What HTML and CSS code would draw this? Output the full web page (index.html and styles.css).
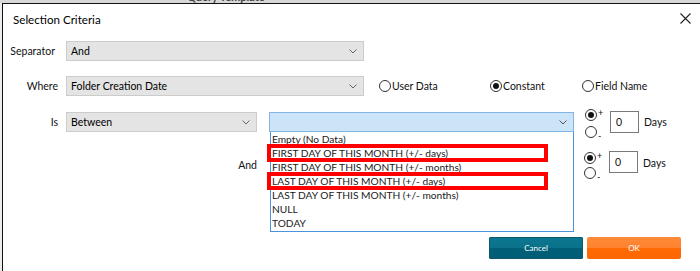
FILE: index.html
```html
<!DOCTYPE html>
<html lang="en">
<head>
    <meta charset="UTF-8">
    <meta name="viewport" content="width=device-width, initial-scale=1.0">
    <title>Selection Criteria</title>
    <link rel="stylesheet" href="styles.css">
</head>
<body>
    <div class="backdrop">
        <span class="backdrop-title">Query Template</span>
    </div>

    <div class="dialog">
        <div class="title-bar">
            <span class="title">Selection Criteria</span>
            <svg class="close" width="11" height="11" viewBox="0 0 11 11">
                <path d="M0.5 0.5 L10.5 10.5 M10.5 0.5 L0.5 10.5" stroke="#222" stroke-width="1.1" fill="none"/>
            </svg>
        </div>

        <div class="form">
            <div class="row row-separator">
                <label class="field-label label-separator">Separator</label>
                <div class="select select-wide">
                    <span>And</span>
                    <svg class="chevron" width="8" height="5" viewBox="0 0 8 5"><path d="M0.5 0.5 L4 4 L7.5 0.5" stroke="#666" fill="none"/></svg>
                </div>
            </div>

            <div class="row row-where">
                <label class="field-label">Where</label>
                <div class="select select-wide">
                    <span>Folder Creation Date</span>
                    <svg class="chevron" width="8" height="5" viewBox="0 0 8 5"><path d="M0.5 0.5 L4 4 L7.5 0.5" stroke="#666" fill="none"/></svg>
                </div>
                <div class="source-options">
                    <span class="radio-item item-user"><span class="radio"></span>User Data</span>
                    <span class="radio-item item-constant"><span class="radio checked"></span>Constant</span>
                    <span class="radio-item"><span class="radio"></span>Field Name</span>
                </div>
            </div>

            <div class="row row-is">
                <label class="field-label">Is</label>
                <div class="select select-op">
                    <span>Between</span>
                    <svg class="chevron" width="8" height="5" viewBox="0 0 8 5"><path d="M0.5 0.5 L4 4 L7.5 0.5" stroke="#666" fill="none"/></svg>
                </div>
                <div class="combo">
                    <div class="select select-value open">
                        <span></span>
                        <svg class="chevron" width="8" height="5" viewBox="0 0 8 5"><path d="M0.5 0.5 L4 4 L7.5 0.5" stroke="#555" fill="none"/></svg>
                    </div>
                    <ul class="dropdown">
                        <li>Empty (No Data)</li>
                        <li>FIRST DAY OF THIS MONTH (+/- days)</li>
                        <li>FIRST DAY OF THIS MONTH (+/- months)</li>
                        <li>LAST DAY OF THIS MONTH (+/- days)</li>
                        <li>LAST DAY OF THIS MONTH (+/- months)</li>
                        <li>NULL</li>
                        <li>TODAY</li>
                    </ul>
                    <div class="highlight highlight-first"></div>
                    <div class="highlight highlight-last"></div>
                </div>
                <div class="offset">
                    <div class="sign-options">
                        <span class="sign-item"><span class="radio checked"></span><span class="sign sign-plus">+</span></span>
                        <span class="sign-item"><span class="radio"></span><span class="sign sign-minus">-</span></span>
                    </div>
                    <div class="number-box">0</div>
                    <span class="unit">Days</span>
                </div>
            </div>

            <div class="row row-and">
                <label class="and-label">And</label>
                <div class="select select-value">
                    <span></span>
                </div>
                <div class="offset offset-and">
                    <div class="sign-options tight">
                        <span class="sign-item"><span class="radio checked"></span><span class="sign sign-plus">+</span></span>
                        <span class="sign-item"><span class="radio"></span><span class="sign sign-minus">-</span></span>
                    </div>
                    <div class="number-box">0</div>
                    <span class="unit">Days</span>
                </div>
            </div>
        </div>

        <div class="actions">
            <button class="btn btn-cancel">Cancel</button>
            <button class="btn btn-ok">OK</button>
        </div>
    </div>
</body>
</html>
```

FILE: styles.css
```css
body {
    margin: 0;
    width: 700px;
    height: 271px;
    overflow: hidden;
    background-color: #ececec;
    font-family: Lato, 'Noto Sans', sans-serif;
    font-size: 10.5px;
    color: #111;
}

.backdrop {
    height: 3px;
    overflow: hidden;
    background-color: #d8d8d8;
}

.backdrop-title {
    display: block;
    margin-top: -9px;
    padding-left: 187px;
    font-weight: bold;
    font-size: 11px;
    line-height: 12px;
    color: #444;
}

.dialog {
    margin-left: 2px;
    height: 267px;
    border-top: 1px solid #111;
    border-left: 1px solid #111;
    background-color: #fff;
}

.title-bar {
    display: flex;
    justify-content: space-between;
    align-items: flex-start;
    height: 30px;
    padding: 8px 9px 0 10px;
    box-sizing: border-box;
}

.title {
    font-size: 11.6px;
    line-height: 16px;
    color: #000;
}

.close {
    margin-top: 1px;
}

.form {
    display: flex;
    flex-direction: column;
    padding-top: 7px;
}

.row {
    display: flex;
    align-items: center;
}

.row-separator,
.row-where {
    height: 20px;
}

.row-where {
    margin-top: 15px;
}

.row-is {
    height: 30px;
    margin-top: 13px;
    align-items: flex-start;
}

.row-is .select {
    margin-top: 3px;
}

.row-is .field-label {
    margin-top: 3px;
    line-height: 20px;
}

.row-and {
    height: 29px;
    margin-top: 11px;
}

.field-label {
    width: 55px;
    margin-right: 8px;
    text-align: right;
    flex-shrink: 0;
}

.label-separator {
    padding-right: 3px;
    box-sizing: border-box;
}

.and-label {
    width: 254px;
    margin-right: 11px;
    text-align: right;
    flex-shrink: 0;
}

.select {
    display: flex;
    align-items: center;
    justify-content: space-between;
    box-sizing: border-box;
    height: 20px;
    padding: 0 6px 0 4px;
    background-color: #e4e4e4;
    border: 1px solid #cccccc;
    color: #000;
}

.select-wide {
    width: 298px;
}

.select-op {
    width: 191px;
}

.select-value {
    width: 305px;
    background-color: #fff;
    border-color: #fff;
}

.select-value.open {
    background-color: #cce4f7;
    border-color: #80b5e6;
}

.chevron {
    flex-shrink: 0;
}

.combo {
    position: relative;
    margin-left: 12px;
}

.dropdown {
    position: absolute;
    top: 23px;
    left: 1px;
    width: 304px;
    height: 100px;
    box-sizing: border-box;
    margin: 0;
    padding: 0 0 0 1px;
    list-style: none;
    background-color: #fff;
    border: 1px solid #4a94de;
    border-top: none;
    z-index: 2;
    font-size: 10.2px;
}

.dropdown li {
    height: 14px;
    line-height: 14px;
    white-space: nowrap;
    color: #1a1a1a;
}

.highlight {
    position: absolute;
    left: -2px;
    width: 281px;
    height: 18px;
    box-sizing: border-box;
    border: 4px solid #ff0000;
    z-index: 3;
}

.highlight-first {
    top: 35px;
}

.highlight-last {
    top: 63px;
}

.source-options {
    display: flex;
    align-items: center;
    margin-left: 15px;
}

.radio-item {
    display: flex;
    align-items: center;
}

.item-user {
    width: 111px;
}

.item-constant {
    width: 92px;
}

.radio {
    position: relative;
    width: 12px;
    height: 12px;
    box-sizing: border-box;
    border: 1px solid #333;
    border-radius: 50%;
    margin-right: 1px;
    flex-shrink: 0;
    background-color: #fff;
}

.radio.checked::after {
    content: '';
    position: absolute;
    top: 2px;
    left: 2px;
    width: 6px;
    height: 6px;
    border-radius: 50%;
    background-color: #111;
}

.offset {
    display: flex;
    align-items: flex-start;
    margin-left: 11px;
}

.offset-and {
    align-self: flex-start;
}

.sign-options {
    display: flex;
    flex-direction: column;
    gap: 5px;
    width: 25px;
}

.sign-options.tight {
    gap: 3px;
    padding-top: 2px;
}

.sign-item {
    display: flex;
    align-items: center;
    height: 12px;
}

.sign {
    font-size: 9px;
    line-height: 9px;
}

.sign-plus {
    margin-top: -5px;
}

.sign-minus {
    margin-top: 6px;
}

.number-box {
    width: 29px;
    height: 22px;
    box-sizing: border-box;
    margin-top: 2px;
    padding-left: 5px;
    border: 1px solid #7a7a7a;
    line-height: 20px;
    color: #111;
}

.offset-and .number-box {
    margin-top: 1px;
}

.unit {
    margin-left: 5px;
    line-height: 26px;
}

.actions {
    display: flex;
    justify-content: flex-end;
    gap: 4px;
    margin-top: 58px;
    padding-right: 19px;
}

.btn {
    width: 94px;
    height: 22px;
    padding: 0;
    border: none;
    border-radius: 2px;
    color: #fff;
    font-family: Lato, 'Noto Sans', sans-serif;
    font-size: 8px;
}

.btn-cancel {
    background: linear-gradient(#0c7893 0%, #0a7189 50%, #006078 52%, #005d74 100%);
    box-shadow: 0 0 0 1px #0d5a6c inset;
}

.btn-ok {
    background: linear-gradient(#ff8a38 0%, #ff8230 50%, #ff6a04 52%, #ff6600 100%);
}
```
